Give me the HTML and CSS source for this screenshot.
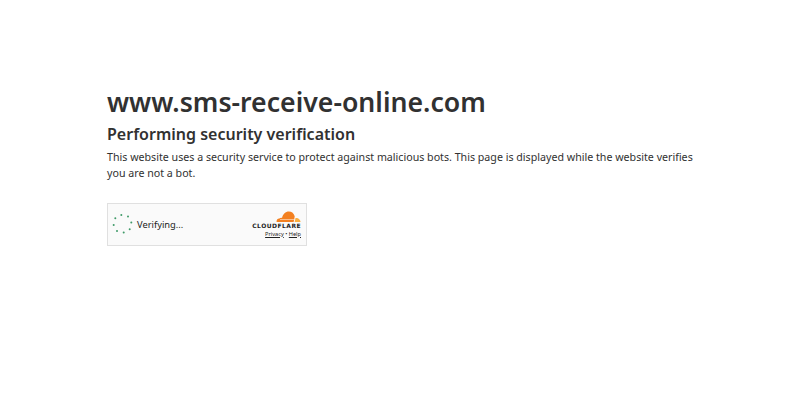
FILE: index.html
```html
<!DOCTYPE html>
<html lang="en">
<head>
<meta charset="utf-8">
<title>www.sms-receive-online.com</title>
<link rel="stylesheet" href="styles.css">
</head>
<body>
<main class="page">
  <h1 class="site">www.sms-receive-online.com</h1>
  <h2 class="status">Performing security verification</h2>
  <p class="note">This website uses a security service to protect against malicious bots. This page is displayed while the website verifies you are not a bot.</p>
  <div class="widget">
    <div class="check">
      <svg class="spinner" width="22" height="22" viewBox="0 0 22 22" aria-hidden="true">
        <g fill="#3f9a68">
          <circle cx="3.300" cy="5.300" r="1"/><circle cx="9.300" cy="2" r="1"/><circle cx="16" cy="3.600" r="1"/>
          <circle cx="19.300" cy="9.600" r="1"/><circle cx="17.700" cy="16.300" r="1"/><circle cx="11.700" cy="19.600" r="1"/>
          <circle cx="5" cy="18" r="1"/><circle cx="1.700" cy="12" r="1"/>
        </g>
      </svg>
      <span class="verifying">Verifying...</span>
    </div>
    <div class="brand">
      <svg class="cloud" width="25" height="11" viewBox="0 0 25 11" aria-hidden="true">
        <path fill="#f38020" d="M.6 11C.2 9.100 1.500 7.600 3.300 7.500 4 6.900 5 6.700 6 6.900 7 3 9.500.4 12.800.4c3 0 5.300 2 5.900 4.900L18.300 8l-.7 3z"/>
        <path fill="#faae40" d="M18.600 11c.4-1.500.7-2.700.9-4 .4-.1.7-.1 1-.1 2 0 3.900 1.700 4.100 4.100z"/>
        <path fill="#fff" d="M4 8.400h14.200v.5H4z"/>
      </svg>
      <span class="wordmark">CLOUDFLARE</span>
      <span class="links"><a href="#">Privacy</a> <span class="dot">•</span> <a href="#">Help</a></span>
    </div>
  </div>
</main>
</body>
</html>
```
FILE: styles.css
```css
* { box-sizing: border-box; }
html, body { margin: 0; padding: 0; background: #fff; }
body { font-family: "Noto Sans", sans-serif; color: #313131; }
.page { width: 587px; margin-left: 107px; padding-top: 85px; }
.site { margin: 0; font-size: 26.67px; line-height: 33px; font-weight: 600; }
.status { margin: 5px 0 0; font-size: 16px; line-height: 22px; font-weight: 600; }
.note { margin: 4px 0 0; font-size: 10.67px; line-height: 16px; }
.widget { margin-top: 21.500px; width: 200px; height: 43.330px; border: 1px solid #e0e0e0; background: #fafafa; display: flex; justify-content: space-between; align-items: center; padding: 0 5px 0 4px; }
.check { display: flex; align-items: center; gap: 3px; }
.spinner { display: block; }
.verifying { font-size: 9.330px; color: #232323; }
.brand { display: flex; flex-direction: column; align-items: flex-end; }
.cloud { display: block; }
.wordmark { font-family: "DejaVu Sans", sans-serif; font-size: 6px; line-height: 6px; font-weight: 700; letter-spacing: .45px; color: #1d1d1d; margin-top: 1px; }
.links { font-size: 5.600px; line-height: 8px; color: #232323; margin-top: 1px; }
.links a { color: #232323; }
```
